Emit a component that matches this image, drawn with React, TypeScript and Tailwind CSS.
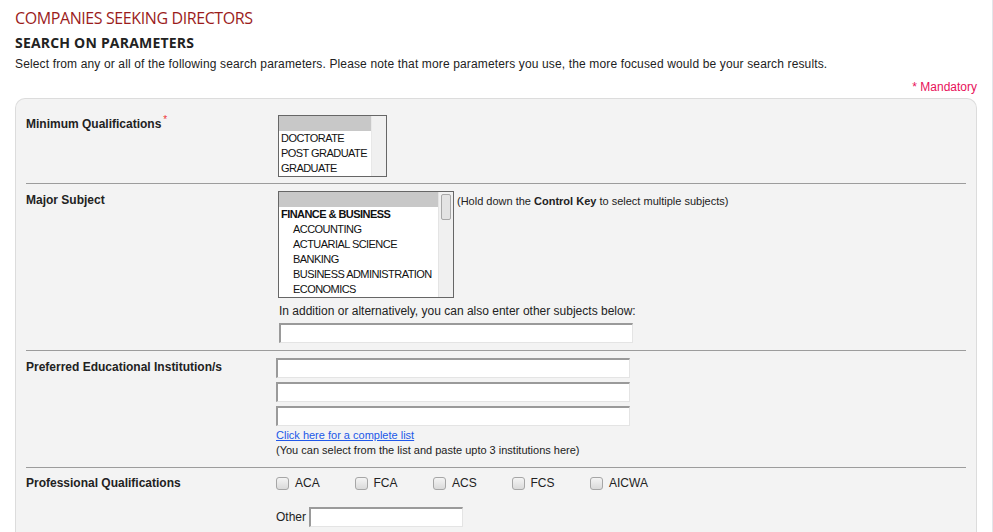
import React from "react"

const quals = ["DOCTORATE", "POST GRADUATE", "GRADUATE"]
const subjects = ["ACCOUNTING", "ACTUARIAL SCIENCE", "BANKING", "BUSINESS ADMINISTRATION", "ECONOMICS"]
const profQuals = ["ACA", "FCA", "ACS", "FCS", "AICWA"]

const inputCls =
  "block h-[20px] bg-white border-t-2 border-l-2 border-r border-b border-t-[#9a9a9a] border-l-[#9a9a9a] border-r-[#e4e4e4] border-b-[#e4e4e4]"

const optionCls = "h-[15px] whitespace-nowrap text-[11px] leading-[15px] tracking-[-0.55px] text-[#111]"

function Row({ label, required, className, children }: { label: string; required?: boolean; className: string; children: React.ReactNode }) {
  return (
    <div className={`flex border-b border-[#9c9c9c] ${className}`}>
      <div className="w-[250px] shrink-0 pt-[2px] font-bold text-[#222] leading-[15px]">
        {label}
        {required && <sup className="ml-[2px] text-[10px] font-normal text-[#e33]">*</sup>}
      </div>
      <div className="flex-1">{children}</div>
    </div>
  )
}

export default function App() {
  return (
    <div className="w-[993px] min-h-screen border-r border-[#e3e6ea] bg-white font-['Liberation_Sans',Arial,sans-serif] text-[12px] text-[#222]">
      <div className="pl-[15px] pr-[15px] pt-[8px]">
        <h1 className="font-['Open_Sans',sans-serif] text-[16px] leading-[20px] tracking-[-0.4px] text-[#9b1c1c]">
          COMPANIES SEEKING DIRECTORS
        </h1>
        <h2 className="mt-[6px] font-['Open_Sans',sans-serif] text-[14px] font-bold leading-[18px] tracking-[0.2px] text-[#222]">
          SEARCH ON PARAMETERS
        </h2>
        <p className="mt-[5px] leading-[15px] tracking-[0.14px]">
          Select from any or all of the following search parameters. Please note that more parameters you use, the more focused would be your search results.
        </p>
        <div className="mt-[8px] text-right leading-[15px] text-[#e8105a]">* Mandatory</div>

        {/* Search box */}
        <div className="mt-[3px] rounded-t-[10px] border border-b-0 border-[#dcdcdc] bg-[#f3f3f3] px-[10px] pb-[40px]">
          <Row label="Minimum Qualifications" required className="pt-[16px] pb-[6px]">
            <div className="ml-[2px] flex h-[62px] w-[109px] border border-[#666] bg-white">
              <div className="min-w-0 flex-1 overflow-hidden">
                <div className="h-[15px] bg-[#c8c8c8]" />
                {quals.map((q) => (
                  <div key={q} className={`${optionCls} pl-[2px]`}>{q}</div>
                ))}
              </div>
              <div className="w-[15px] shrink-0 border-l border-[#e8e8e8] bg-[#f0f0f0]" />
            </div>
          </Row>

          <Row label="Major Subject" className="pt-[7px] pb-[7px]">
            <div className="flex items-start">
              <div className="ml-[2px] flex h-[107px] w-[176px] border border-[#666] bg-white">
                <div className="min-w-0 flex-1 overflow-hidden">
                  <div className="h-[15px] bg-[#c8c8c8]" />
                  <div className={`${optionCls} pl-[2px] font-bold`}>FINANCE &amp; BUSINESS</div>
                  {subjects.map((s) => (
                    <div key={s} className={`${optionCls} pl-[14px]`}>{s}</div>
                  ))}
                </div>
                <div className="w-[15px] shrink-0 border-l border-[#e4e4e4] bg-[#f0f0f0] px-[2px] pt-[2px]">
                  <div className="h-[26px] rounded-[2px] border border-[#a8a8a8] bg-[#e3e3e3]" />
                </div>
              </div>
              <div className="ml-[3px] mt-[4px] text-[11px] leading-[13px]">
                (Hold down the <b>Control Key</b> to select multiple subjects)
              </div>
            </div>
            <div className="ml-[3px] mt-[6px] leading-[15px]">
              In addition or alternatively, you can also enter other subjects below:
            </div>
            <div className={`${inputCls} ml-[3px] mt-[4px] w-[354px]`} />
          </Row>

          <Row label="Preferred Educational Institution/s" className="pt-[7px] pb-[9px]">
            <div className="flex flex-col gap-[4px]">
              <div className={`${inputCls} w-[354px]`} />
              <div className={`${inputCls} w-[354px]`} />
              <div className={`${inputCls} w-[354px]`} />
            </div>
            <a href="#" className="mt-[2px] block text-[11px] leading-[15px] text-[#2158e8] underline">
              Click here for a complete list
            </a>
            <div className="text-[11px] leading-[15px]">(You can select from the list and paste upto 3 institutions here)</div>
          </Row>

          <div className="flex pt-[8px]">
            <div className="w-[250px] shrink-0 font-bold leading-[15px] text-[#222]">Professional Qualifications</div>
            <div className="flex-1">
              <div className="flex">
                {profQuals.map((q) => (
                  <label key={q} className="flex w-[78.5px] items-center gap-[6px] leading-[15px]">
                    <span className="block h-[13px] w-[13px] rounded-[3px] border border-[#a6a6a6] bg-gradient-to-b from-[#f4f4f4] to-[#dadada]" />
                    {q}
                  </label>
                ))}
              </div>
              <div className="mt-[16px] flex items-center gap-[3px]">
                <span className="leading-[15px]">Other</span>
                <div className={`${inputCls} h-[19px] w-[154px]`} />
              </div>
            </div>
          </div>
        </div>
      </div>
    </div>
  )
}
